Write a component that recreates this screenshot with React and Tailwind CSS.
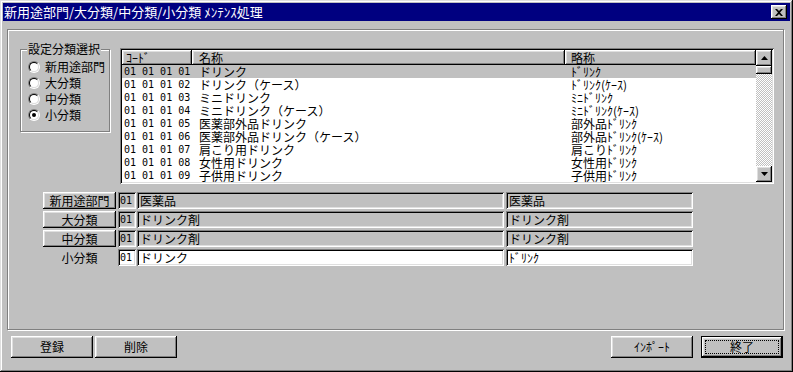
const raised = 'shadow-[inset_-1px_-1px_#000,inset_1px_1px_#fff,inset_-2px_-2px_#808080,inset_2px_2px_#dfdfdf]';
const sunken = 'shadow-[inset_1px_1px_#808080,inset_-1px_-1px_#fff,inset_2px_2px_#000,inset_-2px_-2px_#dfdfdf]';
const etched = 'border border-[#808080] shadow-[inset_1px_1px_#fff,1px_1px_#fff]';

const rows = [
  ['01 01 01 01', 'ドリンク', 'ﾄﾞﾘﾝｸ'],
  ['01 01 01 02', 'ドリンク（ケース）', 'ﾄﾞﾘﾝｸ(ｹｰｽ)'],
  ['01 01 01 03', 'ミニドリンク', 'ﾐﾆﾄﾞﾘﾝｸ'],
  ['01 01 01 04', 'ミニドリンク（ケース）', 'ﾐﾆﾄﾞﾘﾝｸ(ｹｰｽ)'],
  ['01 01 01 05', '医薬部外品ドリンク', '部外品ﾄﾞﾘﾝｸ'],
  ['01 01 01 06', '医薬部外品ドリンク（ケース）', '部外品ﾄﾞﾘﾝｸ(ｹｰｽ)'],
  ['01 01 01 07', '肩こり用ドリンク', '肩こりﾄﾞﾘﾝｸ'],
  ['01 01 01 08', '女性用ドリンク', '女性用ﾄﾞﾘﾝｸ'],
  ['01 01 01 09', '子供用ドリンク', '子供用ﾄﾞﾘﾝｸ'],
];

const fields = [
  { label: '新用途部門', code: '01', name: '医薬品', abbr: '医薬品', button: true },
  { label: '大分類', code: '01', name: 'ドリンク剤', abbr: 'ドリンク剤', button: true },
  { label: '中分類', code: '01', name: 'ドリンク剤', abbr: 'ドリンク剤', button: true },
  { label: '小分類', code: '01', name: 'ドリンク', abbr: 'ﾄﾞﾘﾝｸ', button: false },
];

const radios = ['新用途部門', '大分類', '中分類', '小分類'];

// Win95 style radio button
const Radio = ({ checked }) => (
  <span className="w-[12px] h-[12px] rounded-full border border-t-[#808080] border-l-[#808080] border-b-white border-r-white flex">
    <span className="flex-1 rounded-full border border-t-black border-l-black border-b-[#dfdfdf] border-r-[#dfdfdf] bg-white flex items-center justify-center">
      {checked && <span className="w-[4px] h-[4px] rounded-full bg-black" />}
    </span>
  </span>
);

const Arrow = ({ down }) => (
  <svg width="7" height="4" viewBox="0 0 7 4">
    {down ? <polygon points="0,0 7,0 3.5,4" fill="#000" /> : <polygon points="3.5,0 7,4 0,4" fill="#000" />}
  </svg>
);

const App = () => {
  return (
    <div className="w-[793px] h-[372px] bg-[#c0c0c0] p-[3px] flex flex-col text-[12px] text-black font-['Noto_Sans_CJK_JP',sans-serif] shadow-[inset_-1px_-1px_#000,inset_1px_1px_#dfdfdf,inset_-2px_-2px_#808080,inset_2px_2px_#fff]">
      {/* TITLE BAR */}
      <div className="h-[18px] bg-[#000080] flex items-center justify-between pl-[1px] pr-[3px]">
        <span className="text-white text-[13px] leading-[18px] whitespace-pre">新用途部門/大分類/中分類/小分類 ﾒﾝﾃﾝｽ処理</span>
        <button className={`w-[16px] h-[14px] bg-[#c0c0c0] flex items-center justify-center ${raised}`}>
          <svg width="8" height="7" viewBox="0 0 8 7">
            <path d="M0 0h2l2 2 2-2h2L5 3.5 8 7H6L4 5 2 7H0l3-3.5z" fill="#000" />
          </svg>
        </button>
      </div>

      {/* MAIN PANEL */}
      <div className={`mt-[8px] ml-[4px] w-[777px] h-[301px] ${etched}`}>
        <div className="flex pt-[18px] pl-[12px]">
          {/* GROUP BOX */}
          <div className={`relative mt-[1px] w-[90px] h-[83px] pt-[9px] pl-[7px] ${etched}`}>
            <span className="absolute left-[6px] -top-[8px] px-[1px] bg-[#c0c0c0] leading-[14px]">設定分類選択</span>
            {radios.map((r, i) => (
              <div key={r} className="h-[16px] flex items-center gap-[5px]">
                <Radio checked={i === 3} />
                <span className="leading-[16px]">{r}</span>
              </div>
            ))}
          </div>

          {/* LIST */}
          <div className={`ml-[10px] w-[654px] h-[136px] p-[2px] bg-white flex ${sunken}`}>
            <div className="flex-1 flex flex-col">
              <div className="flex h-[15px] bg-[#c0c0c0]">
                <div className={`w-[70px] pl-[4px] leading-[15px] ${raised}`}>ｺｰﾄﾞ</div>
                <div className={`w-[373px] pl-[7px] leading-[15px] ${raised}`}>名称</div>
                <div className={`flex-1 pl-[6px] leading-[15px] ${raised}`}>略称</div>
              </div>
              {rows.map((r, i) => (
                <div key={r[0]} className={`flex h-[13px] leading-[13px] ${i === 0 ? 'bg-[#c0c0c0]' : ''}`}>
                  <div className="w-[70px] pl-[2px] whitespace-pre font-['DejaVu_Sans_Mono',monospace] text-[10px]">{r[0]}</div>
                  <div className="w-[373px] pl-[7px] whitespace-pre">{r[1]}</div>
                  <div className="flex-1 pl-[6px] whitespace-pre">{r[2]}</div>
                </div>
              ))}
            </div>
            {/* SCROLLBAR */}
            <div className="w-[16px] flex flex-col bg-[repeating-conic-gradient(#c0c0c0_0%_25%,#fff_0%_50%)] bg-size-[2px_2px]">
              <div className={`h-[16px] bg-[#c0c0c0] flex items-center justify-center ${raised}`}>
                <Arrow />
              </div>
              <div className={`h-[8px] bg-[#c0c0c0] ${raised}`} />
              <div className="flex-1" />
              <div className={`h-[16px] bg-[#c0c0c0] flex items-center justify-center ${raised}`}>
                <Arrow down />
              </div>
            </div>
          </div>
        </div>

        {/* FIELDS */}
        <div className="mt-[8px] pl-[35px] flex flex-col gap-[2px]">
          {fields.map((f) => (
            <div key={f.label} className="flex h-[17px]">
              {f.button ? (
                <div className={`w-[73px] text-center leading-[17px] ${raised}`}>{f.label}</div>
              ) : (
                <div className="w-[73px] text-center leading-[17px]">{f.label}</div>
              )}
              <div className={`ml-[2px] w-[18px] pl-[2px] leading-[17px] font-['DejaVu_Sans_Mono',monospace] text-[10px] ${f.button ? 'bg-[#c0c0c0]' : 'bg-white'} ${sunken}`}>
                {f.code}
              </div>
              <div className={`ml-[1px] w-[367px] pl-[3px] leading-[17px] ${f.button ? 'bg-[#c0c0c0]' : 'bg-white'} ${sunken}`}>
                {f.name}
              </div>
              <div className={`ml-[2px] w-[187px] pl-[3px] leading-[17px] ${f.button ? 'bg-[#c0c0c0]' : 'bg-white'} ${sunken}`}>
                {f.abbr}
              </div>
            </div>
          ))}
        </div>
      </div>

      {/* ACTIONS */}
      <div className="mt-[6px] flex items-center">
        <div className="ml-[8px] flex gap-[2px]">
          <button className={`w-[82px] h-[22px] ${raised}`}>登録</button>
          <button className={`w-[82px] h-[22px] ${raised}`}>削除</button>
        </div>
        <div className="ml-auto mr-[7px] flex gap-[8px]">
          <button className={`w-[82px] h-[22px] ${raised}`}>ｲﾝﾎﾟｰﾄ</button>
          <button className="w-[82px] h-[22px] border border-black p-0 flex">
            <span className={`flex-1 p-[3px] flex ${raised}`}>
              <span className="flex-1 border border-dotted border-black flex items-center justify-center leading-[12px]">
                終了
              </span>
            </span>
          </button>
        </div>
      </div>
    </div>
  );
};

export default App;
